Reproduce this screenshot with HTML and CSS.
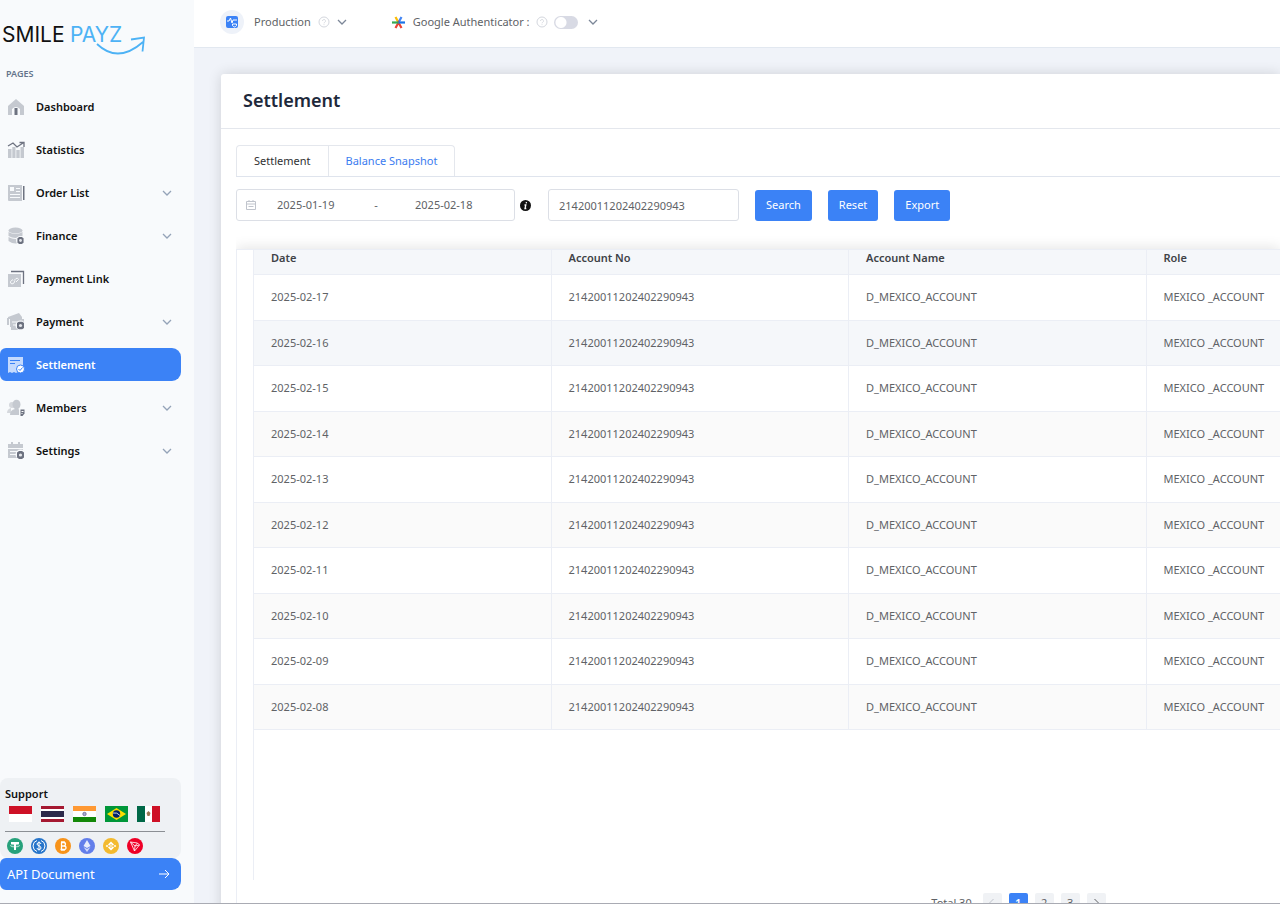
FILE: index.html
```html
<!DOCTYPE html>
<html lang="en">
<head>
<meta charset="utf-8">
<title>Settlement</title>
<link rel="stylesheet" href="styles.css">
</head>
<body>
<svg class="defs" width="0" height="0">
  <symbol id="down" viewBox="0 0 10 8"><path d="M1 2l4 4 4-4" fill="none" stroke="currentColor" stroke-width="1.3"/></symbol>
  <symbol id="help" viewBox="0 0 12 12"><circle cx="6" cy="6" r="5" fill="none" stroke="currentColor"/><path d="M4.5 5a1.5 1.5 0 1 1 2.2 1.3Q6 6.600 6 7.300M6 8.300v.8" fill="none" stroke="currentColor" stroke-width=".9"/></symbol>
  <symbol id="gear" viewBox="0 0 8 8"><path d="M2.500 0h3L7.500 1.500v5L5.500 8h-3L.5 6.500v-5z" fill="#6d7280"/><circle cx="4" cy="4" r="1.600" fill="#e5e7eb"/></symbol>
</svg>
<div class="app">
  <aside class="sidebar">
    <svg class="logo" width="150" height="40" viewBox="0 0 150 40">
      <text x="2" y="24" fill="#111">SMILE</text>
      <text x="70" y="24" fill="#4db2f5">PAYZ</text>
      <path d="M97 26Q118 46 143 24M131 21.500l13-2-1.500 14" fill="none" stroke="#4db2f5" stroke-width="1.800"/>
    </svg>
    <div class="caption">PAGES</div>
    <nav class="menu">
      <a href="#"><svg width="18" height="18"><path d="M1 8l8-7 8 7v9H1z" fill="#c5c9d0"/><path d="M5 17v-6q4-4 8 0v6z" fill="#f8fafc"/><path d="M7.500 10h3v7h-3z" fill="#6d7280"/></svg><span>Dashboard</span></a>
      <a href="#"><svg width="18" height="18"><path d="M1 8h3.500v9H1zM5.300 6h3.200v11H5.300zM9.300 9h3.400v8H9.300zM13.500 6H17v11h-3.500z" fill="#c5c9d0"/><path d="M1 5l5-3 4 4 6-4M12.500 1.500H17V6" fill="none" stroke="#6d7280" stroke-width="1.300"/></svg><span>Statistics</span></a>
      <a href="#"><svg width="18" height="18"><path d="M1 1h14v16H2q-1 0-1-1z" fill="#c5c9d0"/><path d="M3 3h4v4H3zM9 4h4v1H9zM9 7h4v1H9zM3 10h10v1H3zM3 13h10v1H3z" fill="#f8fafc"/><path d="M16 2h1.500v14H16z" fill="#6d7280"/></svg><span>Order List</span><svg class="arrow" width="10" height="8"><use href="#down"/></svg></a>
      <a href="#"><svg width="18" height="18"><ellipse cx="8.500" cy="3.500" rx="7" ry="3" fill="#c5c9d0"/><path d="M1.500 5q7 4 14 0v4q-7 4-14 0zM1.500 10q7 4 14 0v4q-7 5-14 0z" fill="#c5c9d0"/><circle cx="13.500" cy="13.500" r="4.500" fill="#f8fafc"/><use href="#gear" x="10" y="10" width="7" height="7"/></svg><span>Finance</span><svg class="arrow" width="10" height="8"><use href="#down"/></svg></a>
      <a href="#"><svg width="18" height="18"><path d="M4 1.500h12.500V14" fill="none" stroke="#6d7280" stroke-width="1.300"/><path d="M1 4h13v13H1z" fill="#c5c9d0"/><path d="M7 10.500l2-2q2-1 2.500 1l-2.500 2.500M8 10.500l-1 2.500-2 1q-2-.5-1.500-2.500l2.500-2" fill="none" stroke="#f8fafc"/></svg><span>Payment Link</span></a>
      <a href="#"><svg width="18" height="18"><path d="M1 4l11-4 3 4v2H1z" fill="#c5c9d0"/><path d="M3 6h14v8H3z" fill="#c5c9d0"/><path d="M0 5h2v7H0zM4 13h7v4H4z" fill="#c5c9d0"/><path d="M5 9h7M6 12h4" stroke="#f8fafc"/><circle cx="13.500" cy="12.500" r="5" fill="#f8fafc"/><use href="#gear" x="9.500" y="8.500" width="8" height="8"/></svg><span>Payment</span><svg class="arrow" width="10" height="8"><use href="#down"/></svg></a>
      <a class="active" href="#"><svg width="18" height="18"><path d="M1 1h15v9l-4 7-1-1-2 1-2-1-2 1-2-1-2 1z" fill="#c4dafe"/><path d="M3 4.500h10M3 7.500h5" stroke="#3b82f6"/><circle cx="13.500" cy="13" r="4" fill="#fff" stroke="#3b82f6"/><path d="M11.500 13l1.500 1.500 2.500-3" fill="none" stroke="#3b82f6"/></svg><span>Settlement</span></a>
      <a href="#"><svg width="18" height="18"><circle cx="5" cy="6" r="3" fill="#d5d8dd"/><path d="M0 14q0-4 4-5v5z" fill="#d5d8dd"/><ellipse cx="9.500" cy="5.500" rx="4" ry="4.800" fill="#c5c9d0"/><path d="M3 16q0-5 5-6h3q4 1 4 6z" fill="#c5c9d0"/><path d="M12 9h6v8h-6z" fill="#f8fafc"/><path d="M13.500 10.500h4v4l-2 2.500h-2z" fill="#6d7280"/><path d="M14.500 12.500h2M14.500 14.500h1" stroke="#fff"/></svg><span>Members</span><svg class="arrow" width="10" height="8"><use href="#down"/></svg></a>
      <a href="#"><svg width="18" height="18"><path d="M1 2h15v4H1zM1 7h15v9H1zM4 0h2v3H4zM11 0h2v3h-2z" fill="#c5c9d0"/><path d="M3 9.500h10M3 12.500h6" stroke="#f8fafc"/><circle cx="13.500" cy="12.500" r="5" fill="#f8fafc"/><use href="#gear" x="9.500" y="9" width="8" height="8"/></svg><span>Settings</span><svg class="arrow" width="10" height="8"><use href="#down"/></svg></a>
    </nav>
    <div class="support">
      <strong>Support</strong>
      <div class="flags">
        <svg width="23" height="16"><path fill="#fff" d="M0 0h23v16H0z"/><path fill="#ce1126" d="M0 0h23v8H0z"/></svg>
        <svg width="23" height="16"><path fill="#a51931" d="M0 0h23v16H0z"/><path fill="#fff" d="M0 3h23v10H0z"/><path fill="#2d2a4a" d="M0 5h23v6H0z"/></svg>
        <svg width="23" height="16"><path fill="#fff" d="M0 0h23v16H0z"/><path fill="#f93" d="M0 0h23v5H0z"/><path fill="#138808" d="M0 11h23v5H0z"/><circle cx="11.500" cy="8" r="1.700" fill="#aaaad5" stroke="#668" stroke-width=".8"/></svg>
        <svg width="23" height="16"><path fill="#009739" d="M0 0h23v16H0z"/><path fill="#fedd00" d="M11.500 2L21 8l-9.500 6L2 8z"/><circle cx="11.500" cy="8" r="3.700" fill="#012169"/><path d="M8 7q4-1 7 2.500" stroke="#fff" stroke-width=".8" fill="none"/></svg>
        <svg width="23" height="16"><path fill="#fff" d="M0 0h23v16H0z"/><path fill="#006847" d="M0 0h8v16H0z"/><path fill="#ce1126" d="M15 0h8v16h-8z"/><path d="M9.500 7l2-2 2 2-1 3h-2z" fill="#9b7653"/></svg>
      </div>
      <div class="coins">
        <svg width="16" height="16"><circle cx="8" cy="8" r="8" fill="#26a17b"/><path d="M4 4h8v2H9v6H7V6H4z" fill="#fff"/><ellipse cx="8" cy="7.700" rx="4.500" ry="1.200" fill="none" stroke="#fff" stroke-width=".7"/></svg>
        <svg width="16" height="16"><circle cx="8" cy="8" r="8" fill="#2775ca"/><path d="M6 2.500a5.800 5.800 0 0 0 0 11M10 2.500a5.800 5.800 0 0 1 0 11M10 6q-.5-1.500-2-1.500T6 6q0 1.300 2 1.800T10 10q0 1.500-2 1.500T6 10M8 3.500v9" fill="none" stroke="#fff" stroke-width="1"/></svg>
        <svg width="16" height="16"><circle cx="8" cy="8" r="8" fill="#f7931a"/><path d="M6 4.500h2.500q2 0 2 1.700T8.500 8H6h3q2 0 2 1.800t-2 1.700H5.500M6.500 4.500v7M7 3v2M9 3v2M7 11v2M9 11v2" fill="none" stroke="#fff" stroke-width="1.300"/></svg>
        <svg width="16" height="16"><circle cx="8" cy="8" r="8" fill="#627eea"/><path d="M8 2l3.500 6L8 10 4.500 8z" fill="#fff" opacity=".85"/><path d="M4.500 9L8 11l3.500-2L8 14z" fill="#fff" opacity=".7"/></svg>
        <svg width="16" height="16"><circle cx="8" cy="8" r="8" fill="#f3ba2f"/><path d="M5 6.500l3-3 3 3-1.200 1.200L8 5.900 6.200 7.700zM5 9.500l3 3 3-3-1.200-1.200L8 10.100 6.200 8.300zM2.700 8L4 6.700 5.300 8 4 9.300zM10.700 8L12 6.700 13.300 8 12 9.300zM6.900 8L8 6.900 9.100 8 8 9.100z" fill="#fff"/></svg>
        <svg width="16" height="16"><circle cx="8" cy="8" r="8" fill="#ef0027"/><path d="M3.500 4l7 1 2 2L7.500 13zM3.500 4L8 8l-.5 5M8 8l4.500-1M8 8l2.500-3" fill="none" stroke="#fff" stroke-width=".8"/></svg>
      </div>
    </div>
    <a class="api" href="#">API Document<svg width="12" height="10"><path d="M1 5h10M7 1l4 4-4 4" fill="none" stroke="#fff"/></svg></a>
  </aside>

  <div class="content">
    <header class="topbar">
      <div class="env">
        <span class="badge"><svg width="12" height="12"><rect width="12" height="12" rx="2" fill="#3b82f6"/><path d="M1 5h2l1.500-3L6 7l1-3h4M6.500 8h4v1.500q-1 1.500-2 1.500t-2-1.500z" fill="none" stroke="#fff"/></svg></span>
        <span>Production</span>
        <svg class="help" width="12" height="12"><use href="#help"/></svg>
        <svg class="caret" width="10" height="8"><use href="#down"/></svg>
      </div>
      <div class="auth">
        <svg width="13" height="13" fill="none" stroke-width="2.200"><path d="M6.500 6.500L3.500 1" stroke="#fbbc04"/><path d="M6.500 6.500L9.500 1" stroke="#4285f4"/><path d="M3.500 12l3-5.500 3 5.500" stroke="#ea4335"/><path d="M0 6.500h6.500" stroke="#34a853"/><path d="M6.500 6.500H13" stroke="#1a73e8"/></svg>
        <label for="ga">Google Authenticator :</label>
        <svg class="help" width="12" height="12"><use href="#help"/></svg>
        <input class="switch" id="ga" type="checkbox">
        <svg class="caret" width="10" height="8"><use href="#down"/></svg>
      </div>
    </header>

    <main class="card">
      <h1>Settlement</h1>
      <div class="tabs">
        <div class="tabset">
          <button type="button">Settlement</button>
          <button type="button" class="on">Balance Snapshot</button>
        </div>
      </div>
      <form class="filters">
        <div class="range">
          <svg width="12" height="12" fill="none" stroke="#c0c4cc"><path d="M1.500 2.500h9v8h-9zM1.500 5h9M4 1v2M8 1v2M3.500 7.500h5"/></svg>
          <input type="text" aria-label="Start date" value="2025-01-19">
          <span>-</span>
          <input type="text" aria-label="End date" value="2025-02-18">
        </div>
        <svg class="info" width="11" height="11"><circle cx="5.500" cy="5.500" r="5.500" fill="#111"/><path d="M6.500 2L6.200 3.300M4.500 5h1.300L5 8.500h1.300" fill="none" stroke="#fff" stroke-width="1.300"/></svg>
        <input class="account" type="text" aria-label="Account No" value="21420011202402290943">
        <button type="button">Search</button>
        <button type="button">Reset</button>
        <button type="button">Export</button>
      </form>
      <section class="panel">
        <div class="tablebox">
          <table>
            <thead>
              <tr><th>Date</th><th>Account No</th><th>Account Name</th><th>Role</th></tr>
            </thead>
            <tbody>
              <tr><td>2025-02-17</td><td>21420011202402290943</td><td>D_MEXICO_ACCOUNT</td><td>MEXICO _ACCOUNT</td></tr>
              <tr class="hover"><td>2025-02-16</td><td>21420011202402290943</td><td>D_MEXICO_ACCOUNT</td><td>MEXICO _ACCOUNT</td></tr>
              <tr><td>2025-02-15</td><td>21420011202402290943</td><td>D_MEXICO_ACCOUNT</td><td>MEXICO _ACCOUNT</td></tr>
              <tr><td>2025-02-14</td><td>21420011202402290943</td><td>D_MEXICO_ACCOUNT</td><td>MEXICO _ACCOUNT</td></tr>
              <tr><td>2025-02-13</td><td>21420011202402290943</td><td>D_MEXICO_ACCOUNT</td><td>MEXICO _ACCOUNT</td></tr>
              <tr><td>2025-02-12</td><td>21420011202402290943</td><td>D_MEXICO_ACCOUNT</td><td>MEXICO _ACCOUNT</td></tr>
              <tr><td>2025-02-11</td><td>21420011202402290943</td><td>D_MEXICO_ACCOUNT</td><td>MEXICO _ACCOUNT</td></tr>
              <tr><td>2025-02-10</td><td>21420011202402290943</td><td>D_MEXICO_ACCOUNT</td><td>MEXICO _ACCOUNT</td></tr>
              <tr><td>2025-02-09</td><td>21420011202402290943</td><td>D_MEXICO_ACCOUNT</td><td>MEXICO _ACCOUNT</td></tr>
              <tr><td>2025-02-08</td><td>21420011202402290943</td><td>D_MEXICO_ACCOUNT</td><td>MEXICO _ACCOUNT</td></tr>
            </tbody>
          </table>
        </div>
        <div class="pager">
          <span>Total 30</span>
          <button type="button" disabled aria-label="Previous"><svg width="8" height="8"><path d="M5.500 0l-4 4 4 4" fill="none" stroke="#c0c4cc"/></svg></button>
          <button type="button" class="current">1</button>
          <button type="button">2</button>
          <button type="button">3</button>
          <button type="button" aria-label="Next"><svg width="8" height="8"><path d="M2.500 0l4 4-4 4" fill="none" stroke="#606266"/></svg></button>
        </div>
      </section>
    </main>
  </div>
</div>
</body>
</html>
```
FILE: styles.css
```css
* {
	box-sizing: border-box;
}

body {
	margin: 0;
	font: 11px/16px "Noto Sans", "Open Sans", sans-serif;
	color: #606266;
	background: #f0f3f9;
}

button, input {
	font: inherit;
	color: inherit;
}

a {
	text-decoration: none;
}

.defs {
	position: absolute;
}

.app {
	display: flex;
	height: 100vh;
	overflow: hidden;
	border-bottom: 1px solid #a9abb3;
}

/* sidebar */
.sidebar {
	display: flex;
	flex-direction: column;
	flex: 0 0 194px;
	padding: 18px 13px 13px 0;
	background: #f8fafc;
}

.logo {
	flex: none;
	font-family: Inter, sans-serif;
	font-size: 21px;
}

.caption {
	padding: 8px 0 8px 6px;
	font-size: 9px;
	font-weight: 600;
	color: #64748b;
}

.menu {
	display: flex;
	flex-direction: column;
	gap: 10px;
}

.menu a {
	display: flex;
	align-items: center;
	gap: 11px;
	height: 33px;
	padding: 0 9px 0 7px;
	border-radius: 0 9px 9px 0;
	font-weight: 600;
	color: #111;
}

.menu .arrow {
	margin-left: auto;
	color: #94a3b8;
}

.menu .active {
	color: #fff;
	background: #3b82f6;
	border-radius: 6px 9px 9px 6px;
}

.support {
	margin-top: auto;
	padding: 8px 16px 4px 5px;
	background: #eef1f4;
	border-radius: 8px;
}

.support strong {
	display: block;
	font-weight: 600;
	color: #111;
}

.flags {
	display: flex;
	gap: 9px;
	padding: 4px 0 9px 4px;
	border-bottom: 1px solid #8b8f94;
}

.coins {
	display: flex;
	gap: 8px;
	padding: 6px 0 0 2px;
}

.api {
	display: flex;
	align-items: center;
	justify-content: space-between;
	height: 32px;
	padding: 0 11px 0 7px;
	border-radius: 6px 9px 9px 6px;
	font-size: 13px;
	color: #fff;
	background: #3b82f6;
}

/* top bar */
.content {
	flex: 1;
	min-width: 0;
}

.topbar {
	display: flex;
	gap: 45px;
	height: 48px;
	padding: 0 26px 3px;
	background: #fff;
	border-bottom: 1px solid #e2e8f0;
}

.env, .auth {
	display: flex;
	align-items: center;
	gap: 8px;
}

.env {
	gap: 7px;
}

.badge {
	display: flex;
	align-items: center;
	justify-content: center;
	width: 24px;
	height: 24px;
	margin-right: 3px;
	border-radius: 50%;
	background: #eef2f9;
}

.help {
	color: #d4d7de;
}

.auth .help {
	margin-left: -2px;
}

.caret {
	color: #7c8798;
}

.switch {
	appearance: none;
	width: 24px;
	height: 13px;
	margin: 0 2px 0 -2px;
	border-radius: 7px;
	background: radial-gradient(circle at 7px 50%, #fff 5px, transparent 6px) #d8dae4;
}

/* card */
.card {
	height: 100%;
	margin: 26px 0 0 27px;
	background: #fff;
	border-radius: 3px 0 0 0;
	box-shadow: 0 0 14px rgba(0, 0, 0, .14);
}

h1 {
	margin: 0;
	padding: 14px 22px 16px;
	border-bottom: 1px solid #e4e7ed;
	font-size: 18px;
	line-height: 24px;
	font-weight: 600;
	color: #1e293b;
}

.tabs {
	display: flex;
	margin: 16px 0 12px 15px;
	border-bottom: 1px solid #dfe4ed;
}

.tabset {
	display: flex;
	border: 1px solid #e4e7ed;
	border-bottom: 0;
	border-radius: 4px 4px 0 0;
}

.tabs button {
	height: 30px;
	padding: 0 17px;
	border: 0;
	background: none;
	color: #303133;
}

.tabs .on {
	border-left: 1px solid #e4e7ed;
	color: #3b7cf0;
}

.filters {
	display: flex;
	align-items: center;
	gap: 16px;
	padding-left: 15px;
}

.range, .account {
	height: 32px;
	border: 1px solid #dcdfe6;
	border-radius: 3px;
	background: #fff;
}

.range {
	display: flex;
	align-items: center;
	width: 279px;
	padding: 0 8px;
}

.range input {
	width: 100px;
	padding: 0 0 0 20px;
	border: 0;
}

.range span {
	width: 38px;
	text-align: center;
}

.info {
	margin: 0 1px 0 -11px;
}

.account {
	width: 191px;
	padding: 0 10px;
}

.filters button {
	height: 31px;
	padding: 0 11px;
	border: 0;
	border-radius: 3px;
	color: #fff;
	background: #3b82f6;
}

/* table */
.panel {
	margin: 28px 0 0 15px;
	padding-left: 16px;
	border: 1px solid #ebeef5;
	border-right: 0;
	height: 100%;
	box-shadow: 0 -2px 12px rgba(0, 0, 0, .1);
	clip-path: inset(-14px 0 0 0);
}

.tablebox {
	height: 630px;
	border-left: 1px solid #ebeef5;
	overflow: hidden;
}

table {
	width: 1190px;
	height: 480px;
	table-layout: fixed;
	border-collapse: separate;
	border-spacing: 0;
}

th, td {
	padding: 0 17px;
	border-right: 1px solid #ebeef5;
	border-bottom: 1px solid #ebeef5;
	text-align: left;
}

th {
	height: 24px;
	padding-bottom: 8px;
	font-weight: 600;
	color: #404247;
	background: #f5f7fa;
}

tbody tr:nth-child(even) {
	background: #fafafa;
}

tbody .hover {
	background: #f5f7fa !important;
}

.pager {
	display: flex;
	justify-content: center;
	align-items: center;
	gap: 7px;
	padding: 13px 0 0 504px;
}

.pager span {
	margin-right: 4px;
}

.pager button {
	width: 19px;
	height: 19px;
	padding: 0;
	border: 0;
	border-radius: 2px;
	background: #f0f2f5;
}

.pager .current {
	color: #fff;
	font-weight: 600;
	background: #3b82f6;
}
```
